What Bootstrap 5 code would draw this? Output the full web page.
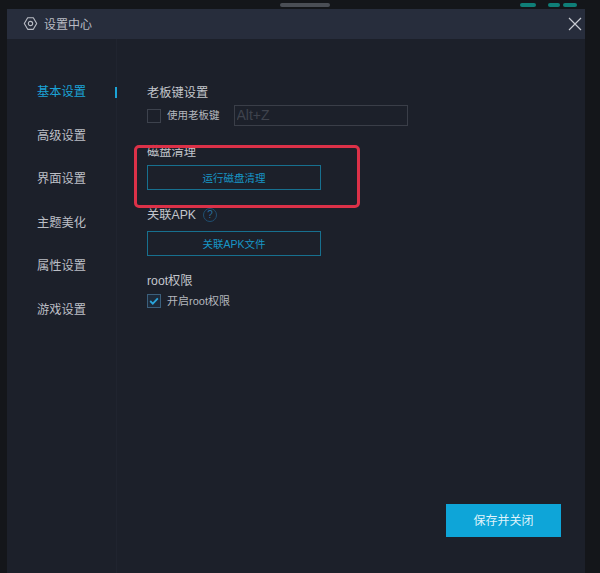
<!DOCTYPE html>
<html lang="zh">
<head>
<meta charset="utf-8">
<title>设置中心</title>
<link href="https://cdn.jsdelivr.net/npm/bootstrap@5.3.0/dist/css/bootstrap.min.css" rel="stylesheet">
<style>
html,body{height:573px;overflow:hidden}
body{background:#14161a;font-family:"Liberation Sans","Noto Sans CJK SC",sans-serif;color:#c3c6cc;font-size:12px}
.topstrip{height:9px;padding-right:23px}
.topstrip i{display:block;height:4px;border-radius:2px;background:#0f7f78}
.topstrip .gr{background:#4a4e55;width:50px;margin-right:190px}
.topstrip .t1{width:16px;margin-right:12px}.topstrip .t2{width:12px;margin-right:3px}.topstrip .t3{width:14px}
.shell{width:578px;margin-left:7px;height:564px;background:#1c202a;position:relative}
.titlebar{height:30px;background:#272d3c;padding-left:16px;color:#b9bcc4}
.titlebar svg.gearic{margin-bottom:2px}
.titlebar .ttl{font-size:12px;margin-left:6px;padding-top:2px}
.closer{background:none;border:0;padding:0;width:20px;height:20px;line-height:0}
.sidenav{width:110px;padding-top:32px;border-right:1px solid #20242f;height:534px}
.sideitem{height:43.5px;padding-left:30px;font-size:12.25px;color:#bcbfc6;line-height:43.5px;position:relative}
.sideitem.on{color:#1ba3d6}
.sideitem.on::after{content:"";position:absolute;right:-1px;top:16px;width:2px;height:11px;background:#1ba3d6}
.mainarea{padding:44px 0 0 30px;flex:1;position:relative;height:534px}
.lbl{font-size:12.25px;line-height:20px;color:#c3c6cc;height:20px}
.boxmk{width:14px;height:14px;border:1px solid #3d424d;flex:none;line-height:0}
.boxmk.chk{border-color:#3b5f7c;background:#1d2a3a}
.hotkey{width:174px;height:21px;border:1px solid #3a3e48;background:transparent;color:#3f434d;font-size:14px;padding:0 2px;margin-left:14px;border-radius:0}
.smalltxt{font-size:11px;margin-left:6px;color:#b4b7be}
.smalltxt.narrow{font-size:10.5px}
.btn.linebtn{width:174px;height:25px;border:1px solid #17708f;border-radius:0;background:transparent;color:#1796c6;font-size:10.5px;padding:0;display:block;line-height:22px}
.help{width:14px;height:14px;border:1.5px solid #1f4f72;border-radius:50%;color:#2a6f9e;font-size:10px;line-height:12px;text-align:center;margin-left:7px}
.btn.savebtn{width:115px;height:33px;background:#0ea5d8;border:0;border-radius:0;color:#dff3fb;font-size:12px;padding:0;position:absolute;right:24px;bottom:36px}
.redmark{position:absolute;left:127px;top:136px;width:226px;height:63px;border:3px solid #dc3148;border-radius:5px;pointer-events:none}
.g1{margin-top:2px}.g2{margin-top:16px}.g3{margin-top:3px}.g4{margin-top:15px}.g5{margin-top:6px}.g6{margin-top:15px}.g7{margin-top:2px}
</style>
</head>
<body>
<div class="topstrip d-flex justify-content-end align-items-center">
  <i class="gr"></i><i class="t1"></i><i class="t2"></i><i class="t3"></i>
</div>
<div class="shell">
  <div class="titlebar d-flex align-items-center">
    <svg class="gearic" width="15" height="15" viewBox="0 0 16 16" fill="none" stroke="#b9bcc4" stroke-width="1.2"><path d="M5 1.8h6l3.6 6.2-3.6 6.2H5L1.4 8z" stroke-linejoin="round"/><circle cx="8" cy="8" r="2.3"/></svg>
    <span class="ttl">设置中心</span>
    <button class="closer ms-auto" type="button" aria-label="关闭"><svg width="14" height="14" viewBox="0 0 14 14" stroke="#c8cbd2" stroke-width="1.2"><path d="M1 1l12 12M13 1L1 13"/></svg></button>
  </div>
  <div class="d-flex">
    <nav class="sidenav">
      <div class="sideitem on">基本设置</div>
      <div class="sideitem">高级设置</div>
      <div class="sideitem">界面设置</div>
      <div class="sideitem">主题美化</div>
      <div class="sideitem">属性设置</div>
      <div class="sideitem">游戏设置</div>
    </nav>
    <div class="mainarea">
      <div class="lbl">老板键设置</div>
      <div class="d-flex align-items-center g1">
        <span class="boxmk"></span><span class="smalltxt narrow">使用老板键</span>
        <input class="hotkey" type="text" value="Alt+Z" readonly>
      </div>
      <div class="lbl g2">磁盘清理</div>
      <button class="btn linebtn g3" type="button">运行磁盘清理</button>
      <div class="d-flex align-items-center g4"><span class="lbl">关联APK</span><span class="help">?</span></div>
      <button class="btn linebtn g5" type="button">关联APK文件</button>
      <div class="lbl g6">root权限</div>
      <div class="d-flex align-items-center g7">
        <span class="boxmk chk"><svg width="12" height="12" viewBox="0 0 12 12" fill="none" stroke="#2aa5dc" stroke-width="1.8"><path d="M2.2 6l2.6 2.6 5-5.2"/></svg></span><span class="smalltxt">开启root权限</span>
      </div>
    </div>
  </div>
  <button class="btn savebtn" type="button">保存并关闭</button>
  <div class="redmark"></div>
</div>
<script src="https://cdn.jsdelivr.net/npm/bootstrap@5.3.0/dist/js/bootstrap.bundle.min.js"></script>
</body>
</html>
